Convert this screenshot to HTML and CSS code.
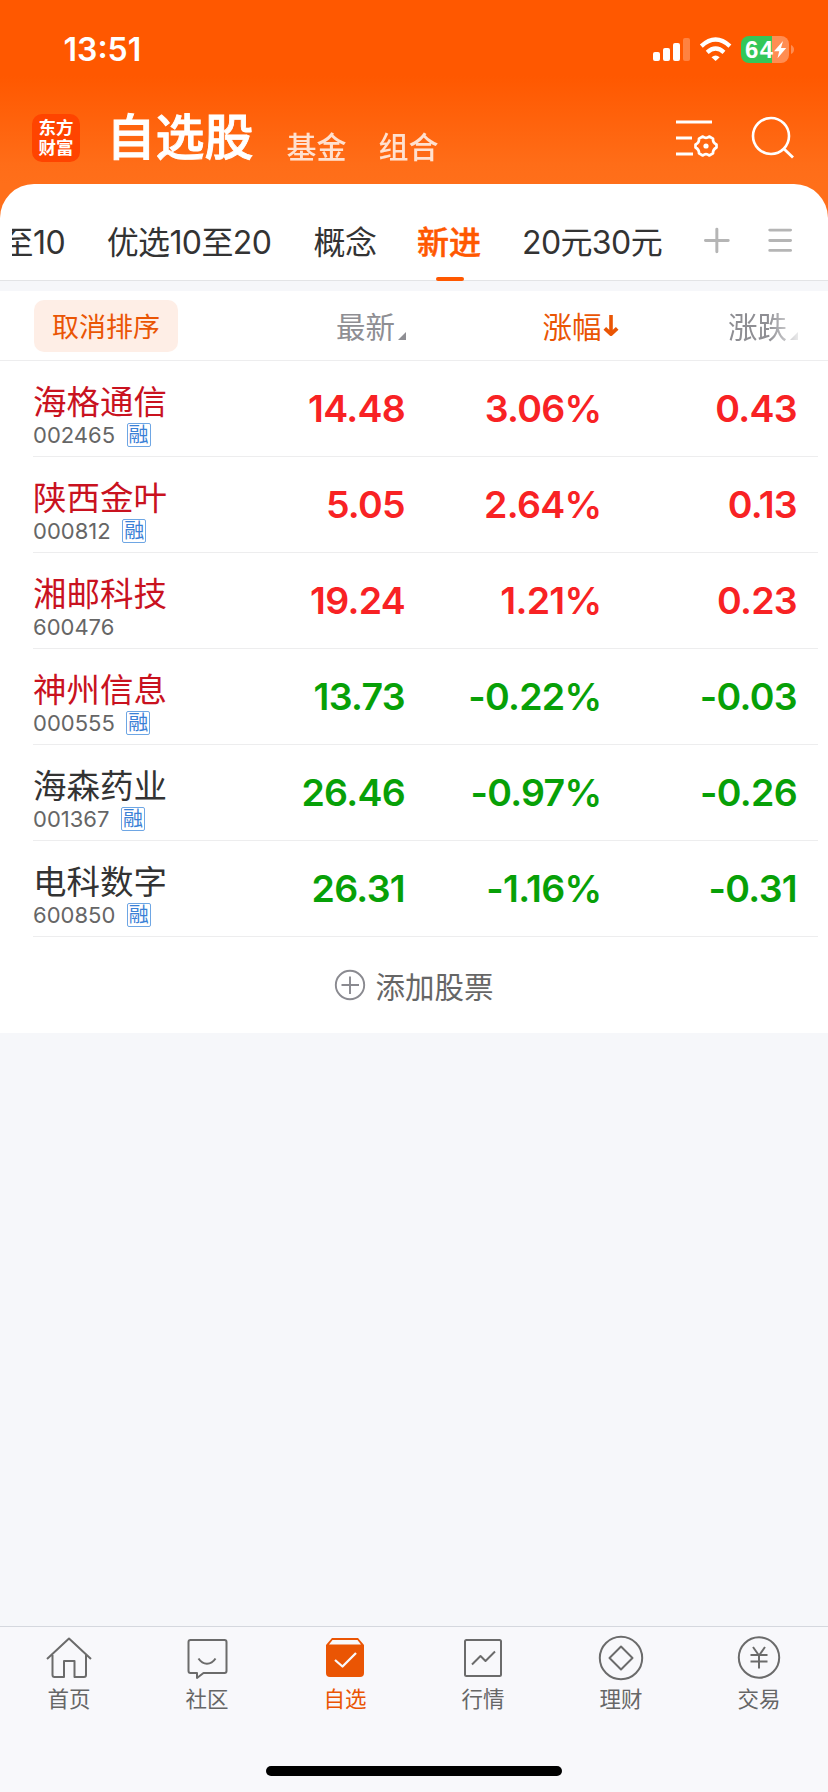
FILE: index.html
```html
<!DOCTYPE html>
<html lang="zh-CN">
<head>
<meta charset="utf-8">
<title>自选股</title>
<link rel="stylesheet" href="styles.css">
</head>
<body>
<div class="app">
  <header class="header">
    <div class="status">
      <span class="time">13:51</span>
      <svg class="status-icons" width="144" height="30" viewBox="652 35 144 30">
        <g fill="#fff">
          <rect x="653" y="52" width="7" height="9" rx="2"/>
          <rect x="663" y="48" width="7" height="13" rx="2"/>
          <rect x="673" y="43" width="7" height="18" rx="2"/>
          <rect x="683" y="38" width="7" height="23" rx="2" opacity=".25"/>
          <path d="M711.5 57.2Q715.6 53.6 719.7 57.2L715.6 61Z"/>
        </g>
        <path d="M701.3 46.2Q715.6 33 729.9 46.2M707.2 52.3Q715.6 44.8 724 52.3" fill="none" stroke="#fff" stroke-width="4.3"/>
        <path d="M749 36H772V63H749A8 8 0 0 1 741 55V44A8 8 0 0 1 749 36Z" fill="#34c759"/>
        <path d="M772 36H781A8 8 0 0 1 789 44V55A8 8 0 0 1 781 63H772Z" fill="#fff" opacity=".32"/>
        <path d="M791 45Q794 46.5 794 49.5T791 54Z" fill="#fff" opacity=".32"/>
        <text class="battery" x="745" y="58" textLength="28">64</text>
        <path d="M783 41L774 51.2H779.2L777.5 58.2L786.2 48H781Z" fill="#fff"/>
      </svg>
    </div>
    <div class="titlebar">
      <div class="logo"><span>东方</span><span>财富</span></div>
      <h1 class="title">自选股</h1>
      <span class="subtitle">基金</span>
      <span class="subtitle">组合</span>
      <svg class="tools" width="124" height="48" viewBox="672 114 124 48" fill="none" stroke="#fff" stroke-width="3">
        <path d="M676 122H712M676 138H692M676 154H693"/>
        <path d="M702.8 136.5Q706 139.2 709.2 136.5L713 138.6Q712.7 143 716.5 144.5V147.5Q712.7 149.5 713 153.4L709.2 155.5Q706 152.8 702.8 155.5L699 153.4Q699.3 149.5 695.5 147.5V144.5Q699.3 143 699 138.6Z" stroke-width="2.7" stroke-linejoin="round"/>
        <circle cx="706" cy="146" r="2.6" fill="#fff" stroke="none"/>
        <circle cx="771" cy="136" r="18" stroke-width="2.6"/>
        <path d="M783.8 148.8L793 157.5" stroke-width="2.8"/>
      </svg>
    </div>
  </header>

  <main class="panel">
    <nav class="tabs">
      <span class="tab tab-cut">至10</span>
      <span class="tab tab-wide">优选10至20</span>
      <span class="tab">概念</span>
      <span class="tab tab-active">新进</span>
      <span class="tab tab-range">20元30元</span>
      <svg class="tab-tools" width="92" height="28" viewBox="702 226 92 28" fill="none" stroke="#b5b5b5" stroke-width="3" stroke-linecap="round">
        <path d="M704.5 240.5H727.5M716 229V252M769.5 230H790.5M769.5 240.5H790.5M769.5 250.5H790.5"/>
      </svg>
    </nav>

    <div class="row head">
      <button class="cancel">取消排序</button>
      <span class="col">最新<svg class="tri" width="8" height="8"><path d="M8 0V8H0Z" fill="#8e8e93"/></svg></span>
      <span class="col sorted">涨幅<svg class="arrow" width="16" height="24" viewBox="0 0 16 24" fill="none" stroke="#ea5504"><path d="M8 2V21" stroke-width="3.6"/><path d="M1.8 15.3L8 21L14.2 15.3" stroke-width="3.8" stroke-linejoin="round"/></svg></span>
      <span class="col fade">涨跌<svg class="tri" width="8" height="8"><path d="M8 0V8H0Z" fill="#8e8e93"/></svg></span>
    </div>

    <div class="row stock up">
      <div class="name red">海格通信</div><div class="code">002465<i class="tag">融</i></div>
      <b class="num">14.48</b><b class="num">3.06%</b><b class="num">0.43</b>
    </div>
    <div class="row stock up">
      <div class="name red">陕西金叶</div><div class="code">000812<i class="tag">融</i></div>
      <b class="num">5.05</b><b class="num">2.64%</b><b class="num">0.13</b>
    </div>
    <div class="row stock up">
      <div class="name red">湘邮科技</div><div class="code">600476</div>
      <b class="num">19.24</b><b class="num">1.21%</b><b class="num">0.23</b>
    </div>
    <div class="row stock down">
      <div class="name red">神州信息</div><div class="code">000555<i class="tag">融</i></div>
      <b class="num">13.73</b><b class="num">-0.22%</b><b class="num">-0.03</b>
    </div>
    <div class="row stock down">
      <div class="name">海森药业</div><div class="code">001367<i class="tag">融</i></div>
      <b class="num">26.46</b><b class="num">-0.97%</b><b class="num">-0.26</b>
    </div>
    <div class="row stock down">
      <div class="name">电科数字</div><div class="code">600850<i class="tag">融</i></div>
      <b class="num">26.31</b><b class="num">-1.16%</b><b class="num">-0.31</b>
    </div>

    <div class="add">
      <svg width="32" height="32" viewBox="0 0 32 32" fill="none" stroke="#8a8a90" stroke-width="1.9"><circle cx="16" cy="16" r="14.2"/><path d="M7.5 16H25M16 7.5V25"/></svg>
      <span>添加股票</span>
    </div>
  </main>

  <footer class="footer">
    <nav class="nav">
      <div class="item">
        <svg width="48" height="48" viewBox="45 1634 48 48"><path d="M47 1659L69 1638.5L91 1659M52.5 1655V1675Q52.5 1677 54.5 1677H64V1661H74.5V1677H84Q86 1677 86 1675V1655"/></svg>
        <span>首页</span>
      </div>
      <div class="item">
        <svg width="48" height="48" viewBox="183 1634 48 48"><path d="M190.500 1640H224.500Q226.500 1640 226.500 1642V1671Q226.500 1673 224.500 1673H203.500L197 1678V1673H190.500Q188.500 1673 188.500 1671V1642Q188.500 1640 190.500 1640ZM198.500 1658.500C203 1665.500 211 1665.500 215.500 1658.500"/></svg>
        <span>社区</span>
      </div>
      <div class="item current">
        <svg width="48" height="48" viewBox="320 1634 48 48"><path d="M331 1638H357L363 1645V1673Q363 1677 359 1677H329Q325 1677 325 1673V1645Z" fill="#ea5504" stroke="none"/><path d="M331.500 1640H356.500L360 1644.500H328Z" fill="#f8f8fb" stroke="none"/><path d="M334 1660L341.500 1666.500L355 1653" stroke="#f8f8fb" stroke-width="2.300"/></svg>
        <span>自选</span>
      </div>
      <div class="item">
        <svg width="48" height="48" viewBox="459 1634 48 48"><rect x="465" y="1640" width="36" height="36" rx="1.500"/><path d="M472 1664.500L480.500 1656L485.500 1661L495 1651.500"/></svg>
        <span>行情</span>
      </div>
      <div class="item">
        <svg width="48" height="48" viewBox="597 1634 48 48"><circle cx="621" cy="1658" r="21.200"/><path d="M621 1646.500L632.500 1658L621 1669.500L609.500 1658Z"/></svg>
        <span>理财</span>
      </div>
      <div class="item">
        <svg width="48" height="48" viewBox="734 1634 48 48"><circle cx="758" cy="1657.500" r="20.200"/><path d="M752 1647L758 1655.500L764 1647M749.500 1655H766.500M749.500 1661.500H766.500M758 1655V1668.500"/></svg>
        <span>交易</span>
      </div>
    </nav>
    <div class="home-indicator"></div>
  </footer>
</div>
</body>
</html>
```

FILE: styles.css
```css
* { box-sizing: border-box; }

body {
  margin: 0;
  font-family: Inter, "Noto Sans CJK SC", sans-serif;
  color: #333;
}

.app {
  display: flex;
  flex-direction: column;
  width: 828px;
  height: 1792px;
  overflow: hidden;
  background: #f6f7fa;
}

/* Header */
.header {
  height: 240px;
  margin-bottom: -56px;
  color: #fff;
  background: linear-gradient(#ff5800 0, #ff5800 76px, #ff6d18 165px, #ff6f1a 184px);
}

.status {
  display: flex;
  justify-content: space-between;
  align-items: center;
  height: 100px;
  padding: 0 32px 0 63.5px;
}

.time {
  font-size: 32px;
  font-weight: 600;
  line-height: 40px;
}

.battery {
  font-family: "Liberation Sans", sans-serif;
  font-size: 24px;
  font-weight: 700;
  fill: #fff;
}

.titlebar {
  display: flex;
  align-items: center;
  height: 76px;
  padding: 0 32px;
}

.logo {
  display: flex;
  flex-direction: column;
  justify-content: center;
  align-items: center;
  width: 48px;
  height: 48px;
  margin-right: 26.5px;
  border-radius: 10px;
  background: #ff4400;
  font-size: 17.5px;
  font-weight: 700;
  line-height: 20px;
}

.title {
  width: 150px;
  margin: 0 30px 0 0;
  font-size: 49px;
  font-weight: 500;
  line-height: 60px;
  white-space: nowrap;
  -webkit-text-stroke: .9px #fff;
}

.subtitle {
  margin: 18px 32px 0 0;
  font-size: 30px;
  font-weight: 500;
  line-height: 36px;
  opacity: .8;
}

.tools { margin-left: auto; }

/* Group tabs */
.panel {
  border-radius: 34px 34px 0 0;
  background: #fff;
}

.tabs {
  display: flex;
  align-items: center;
  height: 97px;
  padding: 0 34px 0 12px;
  border-bottom: 1px solid #e3e4e6;
  font-size: 32px;
}

.tab {
  display: flex;
  flex: none;
  justify-content: center;
  width: 64px;
  height: 96px;
  margin-right: 40px;
  padding-top: 11px;
  line-height: 96px;
  white-space: nowrap;
  letter-spacing: -0.6px;
}

.tab-cut {
  justify-content: flex-end;
  width: 53px;
  overflow: hidden;
}

.tab-wide { width: 168px; }
.tab-range { width: 142px; }

.tab-active {
  position: relative;
  color: #ff5800;
  font-weight: 500;
  letter-spacing: 0;
  -webkit-text-stroke: .5px #ff5800;
}

.tab-active::after {
  content: "";
  position: absolute;
  bottom: -1px;
  left: 19px;
  width: 28px;
  height: 4px;
  border-radius: 2px;
  background: #ff5800;
}

.tab-tools { margin: 15px 0 0 auto; }

/* Quote table */
.row {
  display: grid;
  grid-template-columns: 172px 200px 196.500px 195.500px;
  margin: 0 10px 0 33px;
  border-bottom: 1px solid #ededee;
}

.head {
  align-items: center;
  height: 80px;
  margin: 0;
  padding-left: 34px;
  border-top: 10px solid #f6f7fa;
}

.cancel {
  width: 144px;
  height: 52px;
  padding: 0;
  border: 0;
  border-radius: 10px;
  background: #feeee6;
  color: #ea5504;
  font: 27px/50px "Noto Sans CJK SC", sans-serif;
}

.col {
  display: flex;
  align-items: center;
  justify-content: flex-end;
  height: 52px;
  padding-top: 2px;
  font-size: 29.5px;
  line-height: 52px;
  color: #8e8e93;
}

.tri { margin: 18px 0 0 3px; }

.sorted {
  margin-right: -16px;
  color: #ea5504;
}

.arrow { margin: -4px 0 0 1px; }

.fade {
  -webkit-mask-image: linear-gradient(90deg, #000 165px, transparent 202px);
  mask-image: linear-gradient(90deg, #000 165px, transparent 202px);
}

.stock {
  grid-template-rows: 60px 35px;
  height: 96px;
}

.name {
  grid-area: 1 / 1;
  padding-top: 23px;
  font-size: 33.5px;
  line-height: 37px;
  white-space: nowrap;
}

.name, .code { margin-top: 0; }

.red { color: #c9121f; }

.code {
  grid-area: 2 / 1;
  display: flex;
  align-items: center;
  height: 28px;
  font-size: 22px;
  color: #666;
}

.tag {
  display: flex;
  justify-content: center;
  width: 24px;
  height: 24px;
  margin-left: 11.5px;
  border: 1px solid #6ea6e4;
  border-radius: 2px;
  color: #3a80d6;
  font-size: 20px;
  font-style: normal;
  line-height: 23px;
}

.num {
  grid-row: 1 / 3;
  align-self: center;
  font-size: 37.5px;
  font-weight: 600;
  line-height: 48px;
  letter-spacing: -0.7px;
  text-align: right;
}

.num:nth-child(3) { grid-column: 2; }
.up .num { color: #f82224; }
.down .num { color: #07a007; }

.add {
  display: flex;
  justify-content: center;
  align-items: center;
  gap: 9px;
  height: 96px;
  font-size: 29.5px;
  color: #666;
}

/* Bottom bar */
.footer {
  display: flex;
  flex-direction: column;
  justify-content: space-between;
  align-items: center;
  height: 166px;
  margin-top: auto;
  padding-bottom: 16px;
  border-top: 1px solid #d5d8de;
  background: #f8f8fb;
}

.nav {
  display: flex;
  width: 828px;
  padding-top: 7px;
}

.item {
  display: flex;
  flex: 1;
  flex-direction: column;
  align-items: center;
  font-size: 21.5px;
  line-height: 35px;
  color: #666;
}

.item svg {
  fill: none;
  stroke: #6b6b6b;
  stroke-width: 2;
  stroke-linejoin: round;
}

.current { color: #ea5504; }

.home-indicator {
  width: 296px;
  height: 10px;
  border-radius: 5px;
  background: #000;
}
```
